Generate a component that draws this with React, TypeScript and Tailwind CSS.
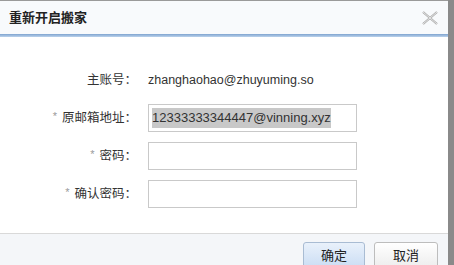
export default function App() {
  const font = { fontFamily: '"Liberation Sans", "Noto Sans CJK SC", sans-serif' };

  return (
    <div className="flex h-[265px] w-[454px] overflow-hidden bg-[#8c8c8c]" style={font}>
      {/* Dialog */}
      <div className="flex w-[448px] flex-col border-t border-[#9a9a9a] bg-white">
        {/* Title bar */}
        <div className="flex h-[33px] items-center justify-between bg-[#f8fafc] pl-[9px] pr-[10px]">
          <span className="text-[13px] font-bold text-[#222]">重新开启搬家</span>
          <svg width="16" height="14" viewBox="0 0 16 14" fill="none">
            <path d="M1 1 L15 13 M15 1 L1 13" stroke="#a8a8a8" strokeWidth="2.2" />
            <path d="M1 1 L15 13 M15 1 L1 13" stroke="#f4f4f4" strokeWidth="0.8" />
          </svg>
        </div>
        <div className="h-[3px] bg-gradient-to-b from-[#7ea3cf] to-[#bcd3ec]" />

        {/* Body */}
        <div className="grid flex-1 grid-cols-[137px_209px] auto-rows-[28px] gap-x-[11px] gap-y-[10px] pt-[29px] text-[12.5px] text-[#333]">
          <div className="flex items-center justify-end">主账号：</div>
          <div className="flex items-center text-[12.5px] whitespace-nowrap">zhanghaohao@zhuyuming.so</div>

          <div className="flex items-center justify-end">
            <span className="mr-[5px] -mt-[3px] text-[11px] text-[#9a9a9a]">*</span>原邮箱地址：
          </div>
          <div className="flex items-center border border-[#c9c9c9] px-[3px] text-[13px] whitespace-nowrap">
            <span className="bg-[#c8c8c8]">12333333344447@vinning.xyz</span>
          </div>

          <div className="flex items-center justify-end">
            <span className="mr-[5px] -mt-[3px] text-[11px] text-[#9a9a9a]">*</span>密码：
          </div>
          <div className="border border-[#c9c9c9]" />

          <div className="flex items-center justify-end">
            <span className="mr-[5px] -mt-[3px] text-[11px] text-[#9a9a9a]">*</span>确认密码：
          </div>
          <div className="border border-[#c9c9c9]" />
        </div>

        {/* Footer */}
        <div className="flex h-[32px] justify-end gap-[9px] border-t border-[#d9d9d9] bg-[#f4f6f9] pr-[10px] pt-[8px]">
          <button className="h-[28px] w-[62px] rounded-[3px] border border-[#a9bcd3] bg-gradient-to-b from-[#e9f1fb] to-[#c9dcf3] text-[13px] text-[#222]">
            确定
          </button>
          <button className="h-[28px] w-[64px] rounded-[3px] border border-[#bdbdbd] bg-gradient-to-b from-white to-[#ececec] text-[13px] text-[#222]">
            取消
          </button>
        </div>
      </div>
      {/* Page strip at the right */}
      <div className="flex-1 bg-[#8a8a8a]" />
    </div>
  );
}
